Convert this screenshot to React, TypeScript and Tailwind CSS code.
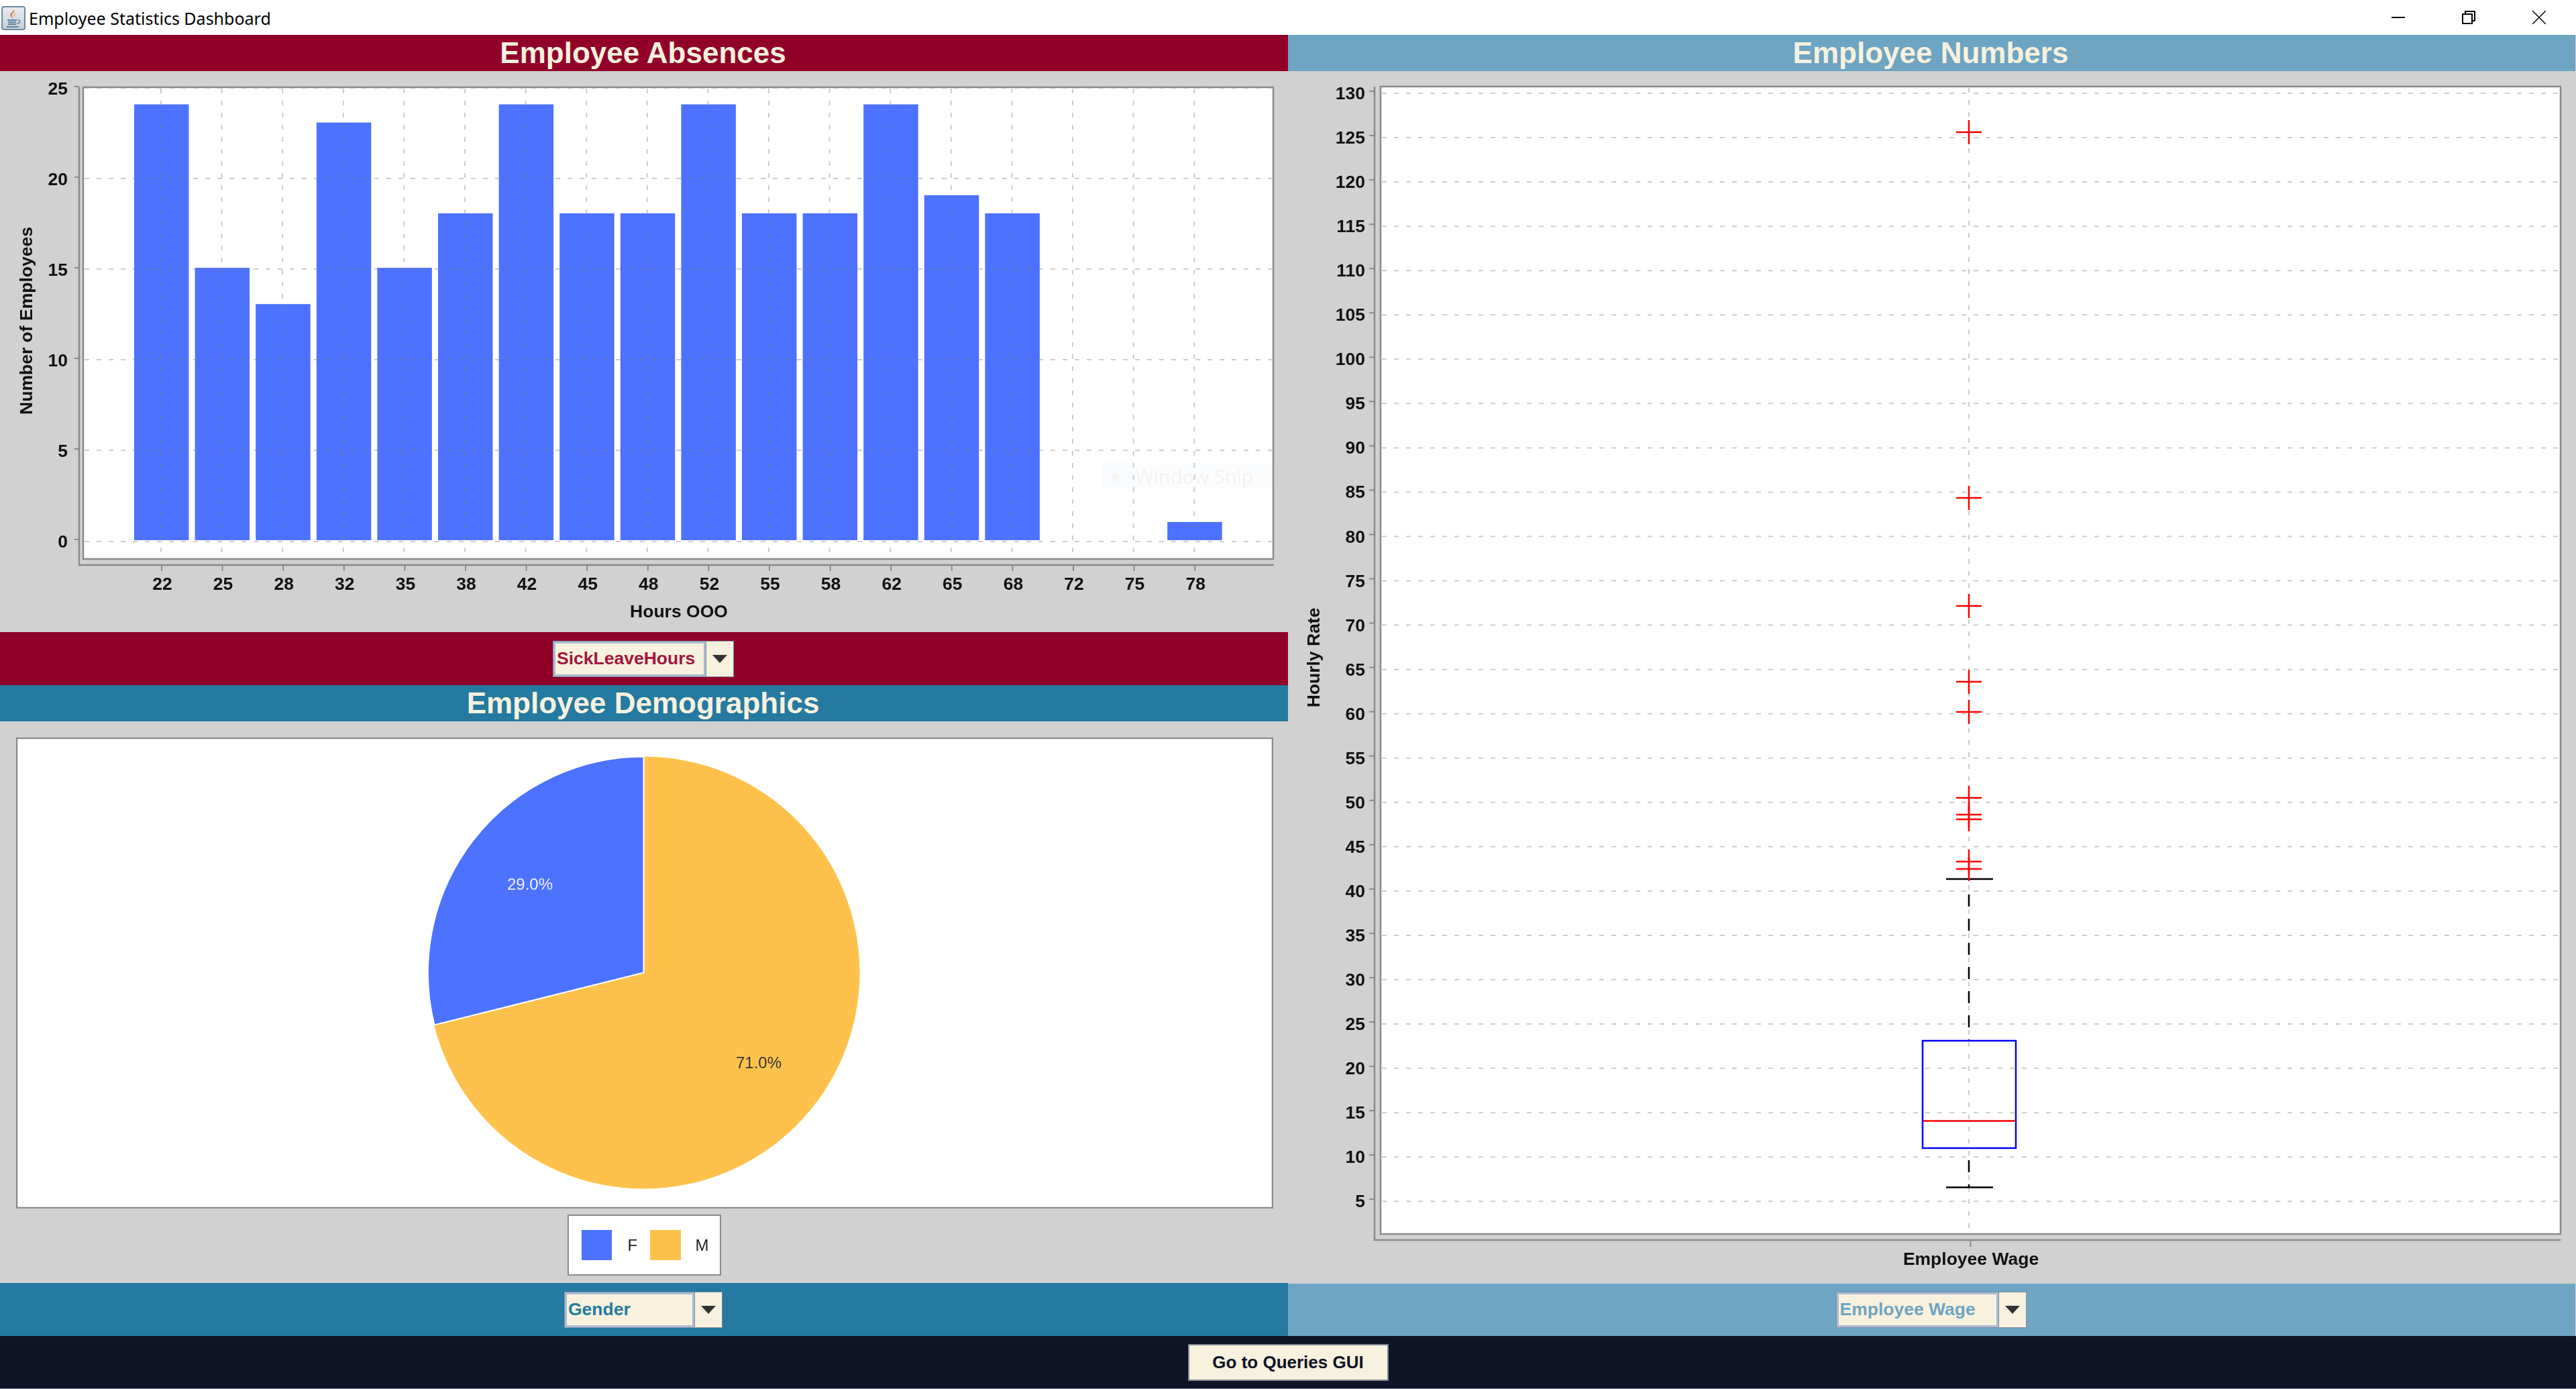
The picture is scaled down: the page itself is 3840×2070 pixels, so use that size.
import React from 'react';

const hours = ['22', '25', '28', '32', '35', '38', '42', '45', '48', '52', '55', '58', '62', '65', '68', '72', '75', '78'];
const absences = [24, 15, 13, 23, 15, 18, 24, 18, 18, 24, 18, 18, 24, 19, 18, 0, 0, 1];
const wageTicks = [130, 125, 120, 115, 110, 105, 100, 95, 90, 85, 80, 75, 70, 65, 60, 55, 50, 45, 40, 35, 30, 25, 20, 15, 10, 5];
const outliers = [197, 742, 903, 1016, 1061, 1189, 1214, 1221, 1284, 1295];

const wageY = (v: number) => 139 + (130 - v) * 13.21;

const Combo = ({ label, color, fieldW }: { label: string; color: string; fieldW: string }) => (
    <div className="flex h-[54px] border border-[#7f8fa3] bg-[#f7f1de]">
        <div className={`flex h-full items-center border-[3px] border-[#a9bdd3] pl-[2px] text-[26.5px] font-bold ${fieldW} ${color}`}>{label}</div>
        <div className="flex w-[41px] items-center justify-center border-l border-[#7f8fa3]">
            <div className="h-0 w-0 border-x-[11px] border-t-[12px] border-x-transparent border-t-[#333333]" />
        </div>
    </div>
);

const Header = ({ title, bg }: { title: string; bg: string }) => (
    <div className={`flex h-[54px] items-center justify-center pr-[3px] text-[44px] font-bold leading-none text-[#f7f1de] ${bg}`}>{title}</div>
);

const AbsenceChart = () => (
    <svg viewBox="0 106 1920 836" className="block h-[836px] w-[1920px] blur-[0.6px]">
        <rect x="124" y="130" width="1774" height="703" fill="#ffffff" />
        {/* ghost of the snipping tool caught in the screenshot */}
        <rect x="1644" y="690" width="253" height="38" fill="#fbfcfe" />
        <rect x="1644" y="690" width="38" height="38" fill="#f8fbff" />
        <circle cx="1663" cy="711" r="6" fill="#f5f3f0" />
        <text x="1693" y="721" fontSize="29" fill="#f2f2f2" className="font-['Open_Sans',sans-serif]">Window Snip</text>
        {absences.map((v, i) => (
            <rect key={i} x={200 + i * 90.6} y={805 - v * 27.06} width="81.5" height={v * 27.06} fill="#4c72ff" />
        ))}
        {[131, 266, 401, 536, 671, 807].map((y) => (
            <line key={y} x1="126" x2="1896" y1={y} y2={y} stroke="#808080" strokeOpacity="0.4" strokeWidth="2" strokeDasharray="7 11" />
        ))}
        {hours.map((_, i) => (
            <line key={i} x1={240 + i * 90.6} x2={240 + i * 90.6} y1="132" y2="832" stroke="#808080" strokeOpacity="0.4" strokeWidth="2" strokeDasharray="7 11" />
        ))}
        <rect x="124" y="130" width="1774" height="703" fill="none" stroke="#8a8a8a" strokeWidth="2.5" />
        <path d="M118 130V842H1899" fill="none" stroke="#8a8a8a" strokeWidth="2.5" />
        {[25, 20, 15, 10, 5, 0].map((v, i) => (
            <g key={v}>
                <line x1="111" x2="118" y1={129 + i * 135} y2={129 + i * 135} stroke="#8a8a8a" strokeWidth="2" />
                <text x="101" y={141 + i * 135} textAnchor="end" fontSize="26.5" fontWeight="700" fill="#111111">{v}</text>
            </g>
        ))}
        {hours.map((h, i) => (
            <g key={h}>
                <line x1={241 + i * 90.6} x2={241 + i * 90.6} y1="842" y2="851" stroke="#8a8a8a" strokeWidth="2" />
                <text x={242 + i * 90.6} y="879" textAnchor="middle" fontSize="26.5" fontWeight="700" fill="#111111">{h}</text>
            </g>
        ))}
        <text x="1012" y="920" textAnchor="middle" fontSize="26.5" fontWeight="700" fill="#111111">Hours OOO</text>
        <text transform="translate(48 478) rotate(-90)" textAnchor="middle" fontSize="26.5" fontWeight="700" fill="#111111">Number of Employees</text>
    </svg>
);

const GenderPie = () => (
    <svg viewBox="24 1099 1874 702" className="block h-[702px] w-[1874px] blur-[0.5px]">
        <rect x="25" y="1100" width="1872" height="700" fill="#ffffff" stroke="#8a8a8a" strokeWidth="2.5" />
        <circle cx="959.5" cy="1449.5" r="322" fill="#fec24c" />
        <path d="M959.5 1449.5V1127.5A322 322 0 0 0 647.5 1527.5Z" fill="#4c72ff" stroke="#ffffff" strokeWidth="2" />
        <text x="790" y="1326" textAnchor="middle" fontSize="24" fill="#f0f0f0">29.0%</text>
        <text x="1131" y="1592" textAnchor="middle" fontSize="24" fill="#333333">71.0%</text>
    </svg>
);

const WageChart = () => (
    <svg viewBox="1920 106 1919 1807" className="block h-[1807px] w-[1919px] blur-[0.6px]">
        <rect x="2058" y="129" width="1759" height="1710" fill="#ffffff" />
        {wageTicks.map((v) => (
            <line key={v} x1="2060" x2="3815" y1={wageY(v)} y2={wageY(v)} stroke="#808080" strokeOpacity="0.4" strokeWidth="2" strokeDasharray="7 11" />
        ))}
        <line x1="2935" x2="2935" y1="131" y2="1838" stroke="#808080" strokeOpacity="0.4" strokeWidth="2" strokeDasharray="7 11" />
        <rect x="2058" y="129" width="1759" height="1710" fill="none" stroke="#8a8a8a" strokeWidth="2.5" />
        <path d="M2049 129V1848H3817" fill="none" stroke="#8a8a8a" strokeWidth="2.5" />
        {wageTicks.map((v) => (
            <g key={v}>
                <line x1="2041" x2="2049" y1={wageY(v) - 3} y2={wageY(v) - 3} stroke="#8a8a8a" strokeWidth="2" />
                <text x="2035" y={wageY(v) + 9} textAnchor="end" fontSize="26.5" fontWeight="700" fill="#111111">{v}</text>
            </g>
        ))}
        <line x1="2937.5" x2="2937.5" y1="1848" y2="1858" stroke="#8a8a8a" strokeWidth="2" />
        <text x="2938" y="1885" textAnchor="middle" fontSize="26.5" fontWeight="700" fill="#111111">Employee Wage</text>
        <text transform="translate(1967 980) rotate(-90)" textAnchor="middle" fontSize="26.5" fontWeight="700" fill="#111111">Hourly Rate</text>
        {/* box plot */}
        <line x1="2935" x2="2935" y1="1333" y2="1551" stroke="#000000" strokeWidth="2.5" strokeDasharray="18 18" />
        <line x1="2935" x2="2935" y1="1729" y2="1769" stroke="#000000" strokeWidth="2.5" strokeDasharray="18 18" />
        <line x1="2901" x2="2971" y1="1310" y2="1310" stroke="#000000" strokeWidth="2.5" />
        <line x1="2901" x2="2971" y1="1769.5" y2="1769.5" stroke="#000000" strokeWidth="2.5" />
        <rect x="2866" y="1551" width="139" height="160" fill="none" stroke="#0000ff" strokeWidth="2.5" />
        <line x1="2867" x2="3004" y1="1670.5" y2="1670.5" stroke="#ff0000" strokeWidth="2.5" />
        {outliers.map((y) => (
            <path key={y} d={`M2916 ${y}H2954M2935 ${y - 18}V${y + 18}`} fill="none" stroke="#ff0000" strokeWidth="2.5" />
        ))}
    </svg>
);

const App: React.FC = () => {
    return (
        <div className="flex h-[2070px] w-[3840px] flex-col overflow-hidden bg-white font-['Liberation_Sans',Arial,sans-serif]">
            {/* Title bar */}
            <div className="flex h-[52px] items-center pl-[2px] pr-[3px]">
                <svg width="36" height="36" viewBox="0 0 36 36" className="mt-[1px]">
                    <defs>
                        <linearGradient id="javaBg" x1="0" y1="0" x2="0" y2="1">
                            <stop offset="0" stopColor="#e9eef3" />
                            <stop offset="1" stopColor="#c3ced9" />
                        </linearGradient>
                    </defs>
                    <rect x="1" y="1" width="34" height="34" rx="3" fill="url(#javaBg)" stroke="#6f8a9f" strokeWidth="2" />
                    <path d="M19 5c3 3-5 6-3 11 1 2 2 3 2 3-4-2-6-6-3-9 2-2 4-3 4-5Z" fill="#e8732a" />
                    <path d="M23 10c-4 2-4 4-2 7-2-1-3-3-2-5 1-1 2-2 4-2Z" fill="#f0a050" />
                    <path d="M9 21h14M10 24h12M10 27h12M8 31h18" stroke="#5f84a0" strokeWidth="2" fill="none" />
                    <path d="M24 21c5-1 5 5-1 5" stroke="#5f84a0" strokeWidth="1.5" fill="none" />
                </svg>
                <div className="ml-[5px] mt-[3px] flex-1 font-['Noto_Sans',sans-serif] text-[25px] leading-none text-black">Employee Statistics Dashboard</div>
                <div className="flex h-full">
                    <div className="flex w-[105px] items-center justify-center">
                        <div className="h-[2px] w-[20px] bg-black" />
                    </div>
                    <div className="flex w-[105px] items-center justify-center">
                        <svg width="20" height="20" viewBox="0 0 20 20" fill="none" stroke="#000000" strokeWidth="2">
                            <rect x="1" y="5" width="14" height="14" />
                            <path d="M5 5V1H19V15H15" />
                        </svg>
                    </div>
                    <div className="flex w-[105px] items-center justify-center">
                        <svg width="20" height="20" viewBox="0 0 20 20" fill="none" stroke="#000000" strokeWidth="1.5">
                            <path d="M0 0L20 20M20 0L0 20" />
                        </svg>
                    </div>
                </div>
            </div>

            {/* Panels */}
            <div className="flex h-[1939px] bg-[#d1d1d1]">
                <div className="flex w-[1920px] flex-col">
                    <Header title="Employee Absences" bg="bg-[#910029]" />
                    <AbsenceChart />
                    <div className="flex h-[79px] items-center justify-center bg-[#910029] pr-[2px]">
                        <Combo label="SickLeaveHours" color="text-[#a3153f]" fieldW="w-[227px]" />
                    </div>
                    <Header title="Employee Demographics" bg="bg-[#247aa0]" />
                    <div className="flex h-[837px] flex-col items-center pt-[24px]">
                        <div className="ml-[2px]">
                            <GenderPie />
                        </div>
                        <div className="mt-[9px] flex h-[91px] w-[229px] items-center border-2 border-[#8a8a8a] bg-white pl-[19px] text-[24px] text-[#222222] blur-[0.4px]">
                            <div className="h-[45px] w-[45px] bg-[#4c72ff]" />
                            <div className="ml-[24px] w-[33px]">F</div>
                            <div className="h-[45px] w-[46px] bg-[#fec24c]" />
                            <div className="ml-[22px]">M</div>
                        </div>
                    </div>
                    <div className="flex h-[79px] items-center justify-center bg-[#247aa0] pr-[2px]">
                        <Combo label="Gender" color="text-[#247aa0]" fieldW="w-[193px]" />
                    </div>
                </div>
                <div className="flex w-[1919px] flex-col">
                    <Header title="Employee Numbers" bg="bg-[#6da5c2]" />
                    <WageChart />
                    <div className="flex h-[78px] items-center justify-center bg-[#6da5c2] pr-[2px]">
                        <Combo label="Employee Wage" color="text-[#6da5c2]" fieldW="w-[241px]" />
                    </div>
                </div>
            </div>

            {/* Footer */}
            <div className="flex h-[79px] items-center justify-center border-b border-[#8a8f99] bg-[#0e1326]">
                <button className="h-[55px] w-[299px] border-2 border-[#7f8796] bg-[#f7f1de] text-[26px] font-bold text-[#0e1326]">Go to Queries GUI</button>
            </div>
        </div>
    );
};

export default App;
